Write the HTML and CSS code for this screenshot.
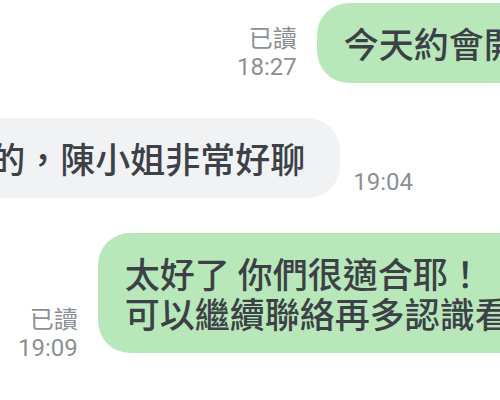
FILE: index.html
```html
<!DOCTYPE html>
<html lang="zh-Hant">
<head>
    <meta charset="UTF-8">
    <meta name="viewport" content="width=device-width, initial-scale=1.0">
    <title>Chat</title>
    <link rel="stylesheet" href="styles.css">
</head>
<body>
    <div class="chat">
        <div class="row row-out row-first">
            <div class="meta">
                <span>已讀</span>
                <span class="time">18:27</span>
            </div>
            <div class="bubble bubble-out">今天約會開心嗎？</div>
        </div>

        <div class="row row-in">
            <div class="bubble bubble-in">很開心的，陳小姐非常好聊</div>
            <div class="meta">
                <span class="time">19:04</span>
            </div>
        </div>

        <div class="row row-out row-third">
            <div class="meta meta-low">
                <span>已讀</span>
                <span class="time">19:09</span>
            </div>
            <div class="bubble bubble-out">太好了 你們很適合耶！<br>可以繼續聯絡再多認識看看</div>
        </div>
    </div>
</body>
</html>
```

FILE: styles.css
```css
body {
    margin: 0;
    width: 500px;
    height: 400px;
    overflow: hidden;
    background-color: #ffffff;
    font-family: "Noto Sans CJK TC", "Noto Sans", sans-serif;
}
.chat {
    display: flex;
    flex-direction: column;
    gap: 35px;
    padding-top: 3px;
}
.row {
    display: flex;
    align-items: flex-end;
}
.row-out {
    gap: 20px;
}
.row-first {
    padding-left: 237px;
}
.row-third {
    padding-left: 18px;
}
.row-in {
    width: 413px;
    justify-content: flex-end;
    gap: 13px;
}
.bubble {
    flex-shrink: 0;
    white-space: nowrap;
    padding: 20px 27px;
    font-size: 35px;
    line-height: 40px;
    font-weight: 500;
    color: #3c4147;
    border-radius: 32px;
}
.bubble-out {
    background: #b8e8b9;
}
.bubble-in {
    background: #f1f2f4;
    padding-right: 35px;
}
.meta {
    display: flex;
    flex-direction: column;
    align-items: flex-end;
    flex-shrink: 0;
    font-size: 24px;
    line-height: 31px;
    color: #8b9095;
}
.meta-low {
    margin-bottom: -11px;
}
.time {
    font-family: Roboto, "Noto Sans", sans-serif;
}
```
